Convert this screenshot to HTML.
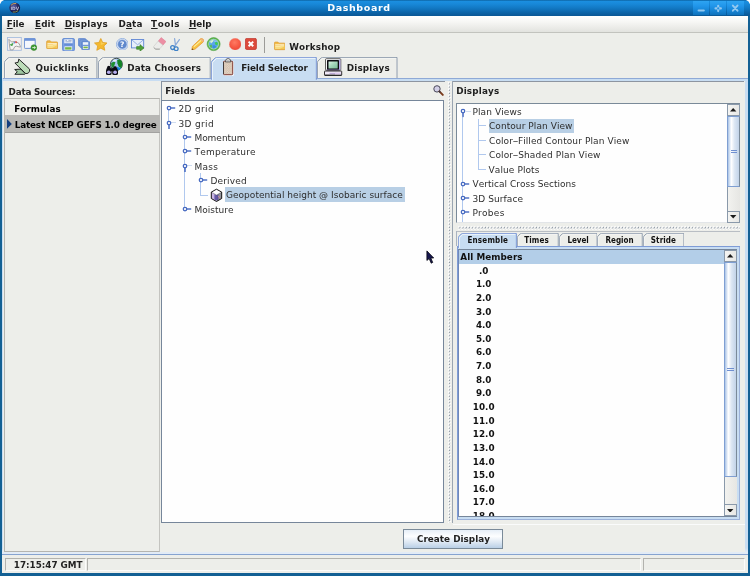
<!DOCTYPE html>
<html>
<head>
<meta charset="utf-8">
<title>Dashboard</title>
<style>
html,body{margin:0;padding:0;}
body{width:750px;height:576px;overflow:hidden;background:#136094;font-family:"DejaVu Sans","Liberation Sans",sans-serif;font-kerning:none;}
#win{position:relative;width:750px;height:576px;overflow:hidden;background:#136094;will-change:transform;filter:blur(0.3px);}
#win div,#win span,#win svg{position:absolute;box-sizing:border-box;white-space:nowrap;}
#win span{line-height:12px;}
#win i{font-style:normal;display:inline-block;transform:scaleX(1.85);margin:0 0.9px 0 0.7px;}
#win u{text-decoration:underline;text-decoration-thickness:0.9px;text-underline-offset:1.1px;text-decoration-skip-ink:none;}
.b{font-weight:bold;font-size:8.8px;color:#1e1e1e;}
.p{font-weight:normal;font-size:9px;color:#2e2e2e;}
.s{font-family:"DejaVu Sans Condensed","DejaVu Sans","Liberation Sans",sans-serif;font-weight:bold;font-size:8px;color:#111;}
.t{font-family:"DejaVu Sans","Liberation Sans",sans-serif;font-weight:bold;font-size:9.5px;color:#fdfeff;}
.tab{background:#edeeea;border:0.9px solid #7a8a99;border-bottom:none;clip-path:polygon(0 5px,5px 0,100% 0,100% 100%,0 100%);}
.tab.sel{background:#c8ddf2;border-color:#6f8fc4;}
.sb{background:linear-gradient(90deg,#f2f2ef,#e6e6e3);border-left:0.9px solid #8a99aa;}
.sbtn{background:linear-gradient(90deg,#f4f4f2,#e8e8e5);border:0.9px solid #8a99aa;}
.thumb{background:linear-gradient(90deg,#a9c3e6 0,#ffffff 30%,#dbe6f3 60%,#c2d3e8 100%);border:0.9px solid #7f9fd2;border-right-color:#7a8a99;}
</style>
</head>
<body>
<div id="win">
<div style="left:0.00px;top:0.00px;width:750.00px;height:16.00px;background:linear-gradient(#0b5c98 0,#1b8fe0 1.2px,#1888d8 4px,#1279c4 8px,#0c66ab 12px,#0a5a9a 15px,#0a5896 16px);"></div>
<svg style="left:0;top:0" width="5" height="5" viewBox="0 0 5 5"><path d="M0 0H4Q1 1 0 4.2Z" fill="#fff"/></svg>
<svg style="left:745px;top:0" width="5" height="5" viewBox="0 0 5 5"><path d="M5 0H1Q4 1 5 4.2Z" fill="#fff"/></svg>
<svg style="left:9px;top:2px" width="11.5" height="11.5" viewBox="0 0 12 12"><defs><radialGradient id="gl" cx="40%" cy="35%" r="70%"><stop offset="0" stop-color="#5b5fa8"/><stop offset=".6" stop-color="#23255c"/><stop offset="1" stop-color="#101030"/></radialGradient></defs><circle cx="6" cy="6" r="5.6" fill="url(#gl)"/><path d="M2 3.5Q4 1 7.5 1.5" stroke="#c9a25a" stroke-width="1" fill="none"/><path d="M4 10.5Q7 11 9.5 9" stroke="#8a9a50" stroke-width="1" fill="none"/><text x="6" y="8" text-anchor="middle" font-family="DejaVu Sans, Liberation Sans, sans-serif" font-weight="bold" font-size="4.6" fill="#c9c9e2" opacity=".9">IDV</text></svg>
<span class="t" style="left:327.20px;top:2px;letter-spacing:0.608px;">Dashboard</span>
<div style="left:692.90px;top:0.90px;width:16.50px;height:14.00px;background:linear-gradient(#2ea4f2 0,#2196ea 35%,#1684d4 70%,#0f72bc 100%);"></div>
<div style="left:710.00px;top:0.90px;width:16.40px;height:14.00px;background:linear-gradient(#2ea4f2 0,#2196ea 35%,#1684d4 70%,#0f72bc 100%);"></div>
<div style="left:727.00px;top:0.90px;width:16.70px;height:14.00px;background:linear-gradient(#2ea4f2 0,#2196ea 35%,#1684d4 70%,#0f72bc 100%);"></div>
<svg style="left:693px;top:1px" width="50.6" height="13.8" viewBox="0 0 50.6 13.8"><g stroke="#92c8f0" fill="none" stroke-linecap="round"><path d="M5.6 9.5H10.8" stroke-width="2.1"/><path d="M25.2 4.7V10.1M22.5 7.4H27.9" stroke-width="2.1"/><circle cx="25.2" cy="7.4" r="1.1" fill="#2590e0" stroke="none"/><path d="M39.9 4.6L44.5 9.7M44.5 4.6L39.9 9.7" stroke-width="2"/></g></svg>
<div style="left:2.40px;top:16.00px;width:745.20px;height:557.40px;background:#edeeea;"></div>
<div style="left:2.40px;top:16.00px;width:745.20px;height:16.60px;background:linear-gradient(#ffffff 0,#f7f7f5 35%,#ecece9 70%,#e2e3df 100%);border-bottom:0.9px solid #c2c3be;"></div>
<span class="b" style="left:6.80px;top:18px;letter-spacing:-0.122px;"><u>F</u>ile</span>
<span class="b" style="left:35.10px;top:18px;letter-spacing:0.073px;"><u>E</u>dit</span>
<span class="b" style="left:64.70px;top:18px;letter-spacing:0.167px;"><u>D</u>isplays</span>
<span class="b" style="left:118.60px;top:18px;letter-spacing:0.120px;">D<u>a</u>ta</span>
<span class="b" style="left:151.10px;top:18px;letter-spacing:0.527px;"><u>T</u>ools</span>
<span class="b" style="left:188.90px;top:18px;"><u>H</u>elp</span>
<svg style="left:7.10px;top:37.10px" width="14.80" height="13.80" viewBox="0 0 16 15"><rect x=".5" y=".5" width="15" height="14" fill="#f6efee" stroke="#a9bfdf" stroke-width="1"/><path d="M2 2.5L5 5.5Q9 3.5 12.5 6.5Q14.5 9 14.5 11L12 10.5Q10.5 9.5 8.5 10.5L6.5 14H3.5Q2.5 9 2.5 7Z" fill="#f4f4f4" stroke="#8a8a8a" stroke-width=".8"/><path d="M3.5 8.5L6.5 7L5.5 9.5Z" fill="#4caf50" stroke="#3c9a40" stroke-width=".8"/><circle cx="9.8" cy="5.8" r="1.1" fill="#e05050"/><circle cx="7.9" cy="6.3" r=".9" fill="#5080e0"/></svg>
<svg style="left:24.20px;top:38.00px" width="13.00" height="12.60" viewBox="0 0 13 12.6"><rect x=".4" y=".4" width="10.8" height="10" rx=".8" fill="#f4f7fd" stroke="#5f86cf" stroke-width=".9"/><rect x=".4" y=".4" width="10.8" height="2.4" fill="#6d93d8"/><circle cx="9.9" cy="9.6" r="2.9" fill="#3e9a32" stroke="#2d7d24" stroke-width=".5"/><path d="M8.3 9.6H11.2M10.2 8.5L11.4 9.6L10.2 10.7" stroke="#e8f6e4" stroke-width=".9" fill="none"/></svg>
<svg style="left:46.00px;top:40.00px" width="12.20" height="9.20" viewBox="0 0 12.2 9.5"><path d="M.5 1.8Q.5 .9 1.4 .9H4.2L5.3 2H11Q11.8 2 11.8 2.9V8.2Q11.8 9 11 9H1.3Q.5 9 .5 8.2Z" fill="#f2bc48" stroke="#dc9c36" stroke-width=".8"/><path d="M1.3 3.3H11V4.4H1.3Z" fill="#fff6d8"/><path d="M1.2 4.6H11.1V8.3H1.2Z" fill="#f9dc80"/><path d="M1.4 5.4H6.4L7.4 4.8H10.8" stroke="#fdf2c4" stroke-width=".7" fill="none"/><path d="M6 8.2L11 5.6V8.2Z" fill="#f4c854"/></svg>
<svg style="left:61.90px;top:37.50px" width="13.00" height="13.40" viewBox="0 0 13 13.4"><rect x=".5" y=".5" width="12" height="12.4" rx="1.4" fill="#7aa0e2" stroke="#658cd4" stroke-width=".9"/><rect x="2.3" y="1.3" width="8.2" height="4" fill="#eef3fb"/><path d="M3.4 2.4H5M6.4 2.4H9.6M3.4 3.8H9.4" stroke="#7a90c0" stroke-width=".7"/><rect x="2.3" y="5.6" width="8.4" height="2" fill="#658cd6"/><rect x="2.5" y="8.4" width="7.6" height="3.8" fill="#f4f7fb"/><rect x="3.1" y="9.2" width="6.4" height="2.4" fill="#78b648"/></svg>
<svg style="left:78.30px;top:38.00px" width="12.10" height="12.20" viewBox="0 0 12.1 12.2"><rect x=".4" y=".4" width="7.2" height="7.6" rx=".9" fill="#7d9fdc" stroke="#5c84cc" stroke-width=".8"/><rect x="1.8" y="1.8" width="7.6" height="7.6" rx=".9" fill="#7d9fdc" stroke="#5c84cc" stroke-width=".8"/><rect x="3.6" y="3.4" width="8" height="8.3" rx=".9" fill="#6f95d8" stroke="#5c84cc" stroke-width=".8"/><rect x="4.9" y="4.2" width="5.3" height="2.6" fill="#eef3fb"/><rect x="5" y="8" width="5.2" height="3" fill="#f4f7fb"/><rect x="5.4" y="8.6" width="4.4" height="1.7" fill="#78b648"/></svg>
<svg style="left:93.60px;top:37.70px" width="13.60" height="12.90" viewBox="0 0 13.6 12.9"><path d="M6.8 .5L8.7 4.5L13.1 5L9.9 8L10.8 12.3L6.8 10.2L2.8 12.3L3.7 8L.5 5L4.9 4.5Z" fill="#f4b92e" stroke="#e0a024" stroke-width=".8" stroke-linejoin="round"/><path d="M6.8 2.2L8 5L11 5.4L6.8 7Z" fill="#f9cf58"/></svg>
<svg style="left:115.70px;top:37.70px" width="12.60" height="12.60" viewBox="0 0 12.6 12.6"><circle cx="6.3" cy="6.3" r="5.9" fill="#e4ecf8" stroke="#88a8dc" stroke-width=".8"/><circle cx="6.3" cy="6.3" r="4.6" fill="#5f88cc" stroke="#a8c0e6" stroke-width=".6"/><text x="6.3" y="9.1" text-anchor="middle" font-family="DejaVu Sans, Liberation Sans, sans-serif" font-weight="bold" font-size="7.6" fill="#fff">?</text></svg>
<svg style="left:131.20px;top:38.70px" width="13.40" height="12.30" viewBox="0 0 13.4 12.3"><rect x=".5" y=".5" width="12.2" height="8.4" fill="#e6eefb" stroke="#5f86d4" stroke-width=".9"/><path d="M.9 .9L6.6 5.8L12.3 .9" stroke="#7f9fdc" stroke-width=".8" fill="none"/><path d="M5.6 7.6H9V5.6L13 9L9 12.2V10.3H5.6Z" fill="#4f9f38" stroke="#357d26" stroke-width=".6" stroke-linejoin="round"/></svg>
<svg style="left:152.80px;top:37.10px" width="13.60" height="12.90" viewBox="0 0 13.6 12.9"><path d="M8.2 .6L13 4.6L9.9 8.2L5.1 4.2Z" fill="#ec8fa4" stroke="#e07a92" stroke-width=".5"/><path d="M5.1 4.2L9.9 8.2L6.6 11.9H2.4L.6 9.6Z" fill="#ececea" stroke="#c4c4c0" stroke-width=".5"/><path d="M1 10.6L2.4 12.2H6.8" stroke="#9a9a98" stroke-width=".9" fill="none"/></svg>
<svg style="left:170.40px;top:37.70px" width="10.20" height="13.10" viewBox="0 0 10.2 13.1"><path d="M4.6 .6L5.6 8.2M9.4 1.6L4.4 8.6" stroke="#88a8d8" stroke-width="1.2" fill="none" stroke-linecap="round"/><circle cx="2.6" cy="9.6" r="1.9" fill="none" stroke="#3f82c8" stroke-width="1.3"/><circle cx="6.2" cy="10.7" r="1.9" fill="none" stroke="#3f82c8" stroke-width="1.3"/></svg>
<svg style="left:190.80px;top:37.70px" width="13.40" height="12.60" viewBox="0 0 13.4 12.6"><path d="M9.6 .8Q11.2 .2 12.4 1.6Q13.2 2.8 12.4 3.8L4.2 11L.8 12L1.4 8.4Z" fill="#f6c443" stroke="#e8962e" stroke-width=".8" stroke-linejoin="round"/><path d="M3 8.6L10.2 2.4" stroke="#fdeea0" stroke-width="1.1"/><path d="M.8 12L1.2 10.2L2.6 11.4Z" fill="#5a4a30"/><path d="M10 1L12.6 3.6" stroke="#f0b090" stroke-width="1.4"/></svg>
<svg style="left:206.00px;top:36.00px" width="16.00" height="16.00" viewBox="206 36 16 16"><circle cx="213.6" cy="44.1" r="6.5" fill="#5cb44e" stroke="#48a040" stroke-width=".6"/><circle cx="213.6" cy="44.1" r="5.3" fill="#b4e4aa"/><circle cx="213.6" cy="44.1" r="4.6" fill="#5aa6ea"/><path d="M210 41.4Q211.6 39.4 214 39.8L213 41.8L211 43.4Z" fill="#d4f2d0"/><path d="M214.6 42.6Q216.8 41.2 218 43.4Q217.6 45.6 215.6 45Z" fill="#3ecc5c"/><path d="M209.4 45.4L211.6 44.6L212.4 47.6L210.8 47.8Z" fill="#58bc58"/><path d="M213.4 40Q216 40 217.2 41.6L214.6 42.2Z" fill="#8cc8f0"/><path d="M212.4 45.4Q214.4 44.6 216.2 46.4Q215.6 48.4 213.6 48.6Q212.2 47.4 212.4 45.4Z" fill="#3a8ee0"/></svg>
<svg style="left:228.90px;top:37.80px" width="12.40" height="12.40" viewBox="0 0 12.4 12.4"><defs><radialGradient id="rg" cx="45%" cy="35%" r="70%"><stop offset="0" stop-color="#ff7a62"/><stop offset=".7" stop-color="#f4533f"/><stop offset="1" stop-color="#e8473a"/></radialGradient></defs><circle cx="6.2" cy="6.2" r="5.9" fill="url(#rg)" stroke="#f08a80" stroke-width=".5"/></svg>
<svg style="left:245.00px;top:38.10px" width="11.80" height="11.90" viewBox="0 0 11.8 11.9"><rect x=".4" y=".4" width="11" height="11.1" rx="1.4" fill="#dc4b3c" stroke="#c23a2e" stroke-width=".8"/><path d="M3.6 3.6L8.2 8.3M8.2 3.6L3.6 8.3" stroke="#fff" stroke-width="2"/></svg>
<div style="left:263.90px;top:37.00px;width:0.90px;height:15.60px;background:#9c9c98;"></div>
<svg style="left:273.80px;top:41.20px" width="11.40" height="9.40" viewBox="0 0 12.2 9.5"><path d="M.5 1.8Q.5 .9 1.4 .9H4.2L5.3 2H11Q11.8 2 11.8 2.9V8.2Q11.8 9 11 9H1.3Q.5 9 .5 8.2Z" fill="#f2bc48" stroke="#dc9c36" stroke-width=".8"/><path d="M1.3 3.3H11V4.4H1.3Z" fill="#fff6d8"/><path d="M1.2 4.6H11.1V8.3H1.2Z" fill="#f9dc80"/><path d="M1.4 5.4H6.4L7.4 4.8H10.8" stroke="#fdf2c4" stroke-width=".7" fill="none"/><path d="M6 8.2L11 5.6V8.2Z" fill="#f4c854"/></svg>
<span class="b" style="left:289.20px;top:41px;letter-spacing:0.167px;">Workshop</span>
<div style="left:2.40px;top:78.20px;width:745.20px;height:476.70px;background:linear-gradient(#c8ddf2 0,#c8ddf2 470px,#e2ebf6 474px);border-bottom:0.9px solid #86a3d0;"></div>
<div style="left:2.50px;top:81.20px;width:742.10px;height:471.00px;background:#edeeea;"></div>
<svg style="left:4.40px;top:57.20px" width="93.40" height="21.20" viewBox="0 0 93.40 21.20"><path d="M0.45 21.200000000000003V5.50Q0.45 4.60 0.95 4.10L4.10 0.95Q4.60 0.45 5.50 0.45H92.95V21.200000000000003" fill="#edeeea" stroke="#8593a6" stroke-width="0.9"/><path d="M1.35 21.200000000000003V5.70L5.50 1.35H92.05" fill="none" stroke="#ffffff" stroke-width="0.8" opacity="0.55"/></svg>
<svg style="left:98.30px;top:57.20px" width="112.70" height="21.20" viewBox="0 0 112.70 21.20"><path d="M0.45 21.200000000000003V5.50Q0.45 4.60 0.95 4.10L4.10 0.95Q4.60 0.45 5.50 0.45H112.25V21.200000000000003" fill="#edeeea" stroke="#8593a6" stroke-width="0.9"/><path d="M1.35 21.200000000000003V5.70L5.50 1.35H111.35" fill="none" stroke="#ffffff" stroke-width="0.8" opacity="0.55"/></svg>
<svg style="left:317.20px;top:57.20px" width="80.50" height="21.20" viewBox="0 0 80.50 21.20"><path d="M0.45 21.200000000000003V5.50Q0.45 4.60 0.95 4.10L4.10 0.95Q4.60 0.45 5.50 0.45H80.05V21.200000000000003" fill="#edeeea" stroke="#8593a6" stroke-width="0.9"/><path d="M1.35 21.200000000000003V5.70L5.50 1.35H79.15" fill="none" stroke="#ffffff" stroke-width="0.8" opacity="0.55"/></svg>
<div style="left:2.50px;top:77.90px;width:745.00px;height:0.90px;background:#8fa9d6;"></div>
<svg style="left:211.30px;top:57.20px" width="105.80" height="22.80" viewBox="0 0 105.80 22.80"><path d="M0.45 22.799999999999997V5.50Q0.45 4.60 0.95 4.10L4.10 0.95Q4.60 0.45 5.50 0.45H105.35V22.799999999999997" fill="#c8ddf2" stroke="#6f8fd2" stroke-width="0.9"/><path d="M1.35 22.799999999999997V5.70L5.50 1.35H104.45" fill="none" stroke="#ffffff" stroke-width="0.8" opacity="0.9"/></svg>
<span class="b" style="left:35.60px;top:62px;letter-spacing:0.216px;">Quicklinks</span>
<span class="b" style="left:127.20px;top:62px;letter-spacing:0.152px;">Data Choosers</span>
<span class="b" style="left:241.20px;top:62px;letter-spacing:-0.139px;">Field Selector</span>
<span class="b" style="left:346.80px;top:62px;letter-spacing:0.167px;">Displays</span>
<svg style="left:13.00px;top:58.00px" width="18.00" height="18.00" viewBox="13 58 18 18"><path d="M14.7 69.5L20.8 69.1L25.4 73.7L24.6 74.3H14.9L17.3 71.7Z" fill="#9fc6a1" stroke="#141414" stroke-width=".9" stroke-linejoin="round"/><path d="M18.8 59.1L29.2 68.7Q30 69.6 29.5 71.3L28.6 72.8Q27 74.1 25.3 73.3L14.9 63L18.1 62.4Z" fill="#bcdcb8" stroke="#141414" stroke-width=".9" stroke-linejoin="round"/></svg>
<svg style="left:104.00px;top:57.00px" width="20.00" height="19.00" viewBox="104 57 20 19"><circle cx="116.4" cy="64.3" r="6" fill="#a6c2ee" stroke="#1c2c24" stroke-width=".8"/><path d="M111 63.6Q112.4 61.4 115.4 62L114.5 65.2L112.8 68.2Q110.8 66.6 111 63.6Z" fill="#1f9030"/><path d="M117.2 60Q120 58.6 121.8 61.6Q122.9 65.4 121.2 68.2L118.6 66.6L117.4 63.2Z" fill="#148428"/><path d="M117.2 66.8L121.2 68.2Q119.8 70 118 70.4L116.6 69.4Z" fill="#1a84d6"/><ellipse cx="114.8" cy="60.6" rx="1.9" ry="1.1" fill="#fff" opacity=".75"/><path d="M107.5 66.2Q108.8 65.5 110.1 66.2L111.6 70.2V73.4Q111.6 75 110 75H107.6Q106 75 106 73.4V70.2Z" fill="#0a0a12"/><path d="M113.7 66.5Q115 65.8 116.3 66.5L118 70.4V73.4Q118 75 116.4 75H113.8Q112.2 75 112.2 73.4V70.4Z" fill="#0a0a12"/><rect x="110.8" y="68.2" width="2.4" height="3" fill="#0a0a12"/><ellipse cx="108.8" cy="72.3" rx="1.9" ry="1.8" fill="#b6aeee"/><ellipse cx="115.1" cy="72.3" rx="1.9" ry="1.8" fill="#b6aeee"/></svg>
<svg style="left:221.00px;top:57.00px" width="15.00" height="20.00" viewBox="221 57 15 20"><defs><pattern id="cb" width="2.4" height="2.4" patternUnits="userSpaceOnUse"><rect width="2.4" height="2.4" fill="#d3bfab"/><circle cx=".6" cy=".6" r=".55" fill="#ebe0d4"/><circle cx="1.8" cy="1.8" r=".55" fill="#ebe0d4"/></pattern></defs><path d="M224.2 75.4H233.4V61.6" stroke="#ffffff" stroke-width=".9" fill="none" opacity=".85"/><rect x="223.5" y="61.2" width="9.2" height="13.5" rx=".9" fill="url(#cb)" stroke="#7c2c22" stroke-width=".9"/><path d="M223.5 62V74" stroke="#3c3c3c" stroke-width=".9"/><path d="M225.4 61.9Q225.4 58.5 228.1 58.5Q230.8 58.5 230.8 61.9Z" fill="#f4f4f4" stroke="#3a3a3a" stroke-width=".8"/><path d="M226.8 60.9H229.6" stroke="#8a8a8a" stroke-width=".8"/></svg>
<svg style="left:323.00px;top:57.00px" width="20.00" height="20.00" viewBox="323 57 20 20"><defs><linearGradient id="scr" x1="0" y1="0" x2="1" y2="1"><stop offset="0" stop-color="#dcf2e6"/><stop offset=".45" stop-color="#a4d6bc"/><stop offset="1" stop-color="#78b898"/></linearGradient></defs><rect x="325.5" y="58.7" width="15.3" height="11.5" rx=".9" fill="#f6f6f8" stroke="#3a3a3a" stroke-width=".8"/><rect x="339" y="59.6" width="1.4" height="10.2" fill="#b4a6e4"/><rect x="327.0" y="60.0" width="12.0" height="9.8" rx=".6" fill="#0c0c12"/><rect x="328.5" y="61.5" width="9.2" height="7.0" fill="url(#scr)"/><rect x="327" y="69.4" width="12.4" height=".9" fill="#54447a"/><rect x="324.5" y="71" width="17.2" height="4.3" rx=".5" fill="#efe8f6" stroke="#1a1a1a" stroke-width=".9"/><path d="M324.6 75.2H341.6" stroke="#111" stroke-width=".9"/><path d="M329.5 73.4H336.5" stroke="#a890c8" stroke-width=".8"/><path d="M335 72.6H340.6V74.4H335Z" fill="#dcc8ec"/></svg>
<span class="b" style="left:8.60px;top:86px;letter-spacing:-0.209px;color:#222;">Data Sources:</span>
<div style="left:4.40px;top:98.00px;width:155.90px;height:453.80px;border:0.9px solid #b4b4b0;border-right-color:#c4c4c0;"></div>
<span class="b" style="left:14.30px;top:103px;letter-spacing:0.048px;color:#000;">Formulas</span>
<div style="left:5.20px;top:115.20px;width:154.40px;height:17.40px;background:#b7b7b4;border-bottom:0.9px solid #a2a2a0;"></div>
<svg style="left:6.90px;top:119.00px" width="4.80" height="9.80" viewBox="0 0 4.8 9.8"><path d="M0 0L4.8 4.9L0 9.8Z" fill="#153f80"/></svg>
<span class="b" style="left:14.70px;top:119px;letter-spacing:-0.139px;color:#000;">Latest NCEP GEFS 1.0 degree</span>
<div style="left:160.90px;top:81.20px;width:284.30px;height:442.00px;border-left:1px solid #8493a3;border-top:0.9px solid #8d95a1;"></div>
<span class="b" style="left:165.20px;top:85px;letter-spacing:0.061px;color:#222;">Fields</span>
<svg style="left:432.60px;top:84.60px" width="11.00" height="11.00" viewBox="0 0 11 11"><circle cx="4" cy="3.9" r="3.2" fill="#d2cfe6" stroke="#4a4a5a" stroke-width="1"/><path d="M6.4 6.4L9.8 9.9" stroke="#7a3a1a" stroke-width="1.9" stroke-linecap="round"/><path d="M6 6L7.4 7.4" stroke="#3a3a4a" stroke-width="1.4"/></svg>
<div style="left:161.10px;top:99.80px;width:283.20px;height:423.40px;background:#fefefe;border:1.2px solid #76869a;"></div>
<div style="left:168.45px;top:110.20px;width:0.90px;height:10.41px;background:#b0c8ee;"></div>
<div style="left:171.20px;top:122.26px;width:5.30px;height:0.90px;background:#cfdcf0;"></div>
<div style="left:184.35px;top:130.21px;width:0.90px;height:76.86px;background:#b0c8ee;"></div>
<div style="left:187.20px;top:165.49px;width:5.30px;height:0.90px;background:#cfdcf0;"></div>
<div style="left:200.15px;top:173.24px;width:0.90px;height:22.42px;background:#b0c8ee;"></div>
<div style="left:200.60px;top:194.81px;width:7.40px;height:0.90px;background:#b0c8ee;"></div>
<svg style="left:165.90px;top:105.20px" width="10.50" height="6.00" viewBox="0 0 10.5 6"><path d="M4.8 3H9.2" stroke="#4468c0" stroke-width="1.4" stroke-linecap="butt"/><circle cx="3" cy="3" r="1.75" fill="#fff" stroke="#4468c0" stroke-width="1.25"/></svg>
<span class="p" style="left:178.50px;top:103px;letter-spacing:0.332px;">2D grid</span>
<svg style="left:165.90px;top:119.61px" width="6.00" height="9.50" viewBox="0 0 6 9.5"><path d="M3 4.6V8.6" stroke="#4468c0" stroke-width="1.5" stroke-linecap="round"/><circle cx="3" cy="3" r="1.75" fill="#fff" stroke="#4468c0" stroke-width="1.25"/></svg>
<span class="p" style="left:178.50px;top:118px;letter-spacing:0.332px;">3D grid</span>
<svg style="left:181.90px;top:134.02px" width="10.50" height="6.00" viewBox="0 0 10.5 6"><path d="M4.8 3H9.2" stroke="#4468c0" stroke-width="1.4" stroke-linecap="butt"/><circle cx="3" cy="3" r="1.75" fill="#fff" stroke="#4468c0" stroke-width="1.25"/></svg>
<span class="p" style="left:194.40px;top:132px;letter-spacing:-0.019px;">Momentum</span>
<svg style="left:181.90px;top:148.43px" width="10.50" height="6.00" viewBox="0 0 10.5 6"><path d="M4.8 3H9.2" stroke="#4468c0" stroke-width="1.4" stroke-linecap="butt"/><circle cx="3" cy="3" r="1.75" fill="#fff" stroke="#4468c0" stroke-width="1.25"/></svg>
<span class="p" style="left:194.60px;top:146px;letter-spacing:0.230px;">Temperature</span>
<svg style="left:181.90px;top:162.84px" width="6.00" height="9.50" viewBox="0 0 6 9.5"><path d="M3 4.6V8.6" stroke="#4468c0" stroke-width="1.5" stroke-linecap="round"/><circle cx="3" cy="3" r="1.75" fill="#fff" stroke="#4468c0" stroke-width="1.25"/></svg>
<span class="p" style="left:194.40px;top:161px;letter-spacing:0.259px;">Mass</span>
<svg style="left:198.00px;top:177.25px" width="10.50" height="6.00" viewBox="0 0 10.5 6"><path d="M4.8 3H9.2" stroke="#4468c0" stroke-width="1.4" stroke-linecap="butt"/><circle cx="3" cy="3" r="1.75" fill="#fff" stroke="#4468c0" stroke-width="1.25"/></svg>
<span class="p" style="left:210.40px;top:175px;letter-spacing:0.167px;">Derived</span>
<div style="left:225.00px;top:187.30px;width:180.20px;height:14.40px;background:#b8cfe5;"></div>
<svg style="left:209.00px;top:187.00px" width="15.00" height="16.00" viewBox="209 187 15 16"><path d="M211.3 192.1L216.5 195V201.5L211.3 198.5Z" fill="#cab6e4"/><path d="M216.5 195L221.7 192.1V198.5L216.5 201.5Z" fill="#94949c"/><path d="M214.4 194.2L216.5 195.2L218.4 194.3V199.6L216.5 200.6L214.4 199.6Z" fill="#54489c" opacity=".85"/><path d="M218.2 196L220.2 198.4" stroke="#d88a98" stroke-width=".9"/><path d="M216.5 189.2L221.7 192.1L216.5 195L211.3 192.1Z" fill="#ffffff"/><path d="M216.5 189.2L221.7 192.1V198.5L216.5 201.5L211.3 198.5V192.1Z" fill="none" stroke="#080808" stroke-width=".95" stroke-linejoin="round"/><path d="M211.3 192.1L216.5 195L221.7 192.1" fill="none" stroke="#080808" stroke-width=".6" opacity=".55"/></svg>
<span class="p" style="left:226.00px;top:189px;letter-spacing:0.032px;">Geopotential height @ Isobaric surface</span>
<svg style="left:181.90px;top:206.07px" width="10.50" height="6.00" viewBox="0 0 10.5 6"><path d="M4.8 3H9.2" stroke="#4468c0" stroke-width="1.4" stroke-linecap="butt"/><circle cx="3" cy="3" r="1.75" fill="#fff" stroke="#4468c0" stroke-width="1.25"/></svg>
<span class="p" style="left:194.40px;top:204px;letter-spacing:0.030px;">Moisture</span>
<div style="left:445.40px;top:81.20px;width:6.60px;height:442.00px;background:#edeeea;"></div>
<div style="left:447.60px;top:82.00px;width:3.60px;height:440.60px;background-image:radial-gradient(circle at 0.9px 0.9px,#ffffff 0.55px,rgba(255,255,255,0) 1.0px),radial-gradient(circle at 1.7px 1.7px,#8f99a6 0.6px,rgba(143,153,166,0) 1.1px),radial-gradient(circle at 2.5px 2.5px,#ffffff 0.55px,rgba(255,255,255,0) 1.0px),radial-gradient(circle at 3.3px 3.3px,#8f99a6 0.6px,rgba(143,153,166,0) 1.1px);background-size:3.2px 3.2px;"></div>
<div style="left:452.00px;top:81.20px;width:0.90px;height:442.20px;background:#9aa5b1;"></div>
<div style="left:452.90px;top:81.10px;width:291.50px;height:0.90px;background:#8d95a1;"></div>
<span class="b" style="left:456.20px;top:85px;letter-spacing:0.167px;color:#222;">Displays</span>
<div style="left:456.00px;top:103.20px;width:284.00px;height:120.20px;background:#fefefe;border:1px solid #7a8a99;border-bottom:0.8px solid #e2e5e8;"></div>
<div style="left:462.35px;top:117.40px;width:0.90px;height:105.00px;background:#b0c8ee;"></div>
<div style="left:465.80px;top:111.05px;width:4.80px;height:0.90px;background:#cfdcf0;"></div>
<div style="left:477.95px;top:118.70px;width:0.90px;height:50.82px;background:#b0c8ee;"></div>
<div style="left:478.40px;top:125.48px;width:7.80px;height:0.90px;background:#b0c8ee;"></div>
<div style="left:478.40px;top:139.91px;width:7.80px;height:0.90px;background:#b0c8ee;"></div>
<div style="left:478.40px;top:154.34px;width:7.80px;height:0.90px;background:#b0c8ee;"></div>
<div style="left:478.40px;top:168.77px;width:7.80px;height:0.90px;background:#b0c8ee;"></div>
<div style="left:488.80px;top:118.80px;width:85.60px;height:14.10px;background:#b8cfe5;"></div>
<svg style="left:460.20px;top:108.40px" width="6.00" height="9.50" viewBox="0 0 6 9.5"><path d="M3 4.6V8.6" stroke="#4468c0" stroke-width="1.5" stroke-linecap="round"/><circle cx="3" cy="3" r="1.75" fill="#fff" stroke="#4468c0" stroke-width="1.25"/></svg>
<span class="p" style="left:472.40px;top:106px;letter-spacing:0.109px;">Plan Views</span>
<span class="p" style="left:489.00px;top:120px;letter-spacing:0.068px;">Contour Plan View</span>
<span class="p" style="left:489.00px;top:135px;letter-spacing:0.095px;">Color<i>-</i>Filled Contour Plan View</span>
<span class="p" style="left:489.00px;top:149px;letter-spacing:0.132px;">Color<i>-</i>Shaded Plan View</span>
<span class="p" style="left:488.60px;top:164px;letter-spacing:0.091px;">Value Plots</span>
<svg style="left:460.20px;top:180.55px" width="10.50" height="6.00" viewBox="0 0 10.5 6"><path d="M4.8 3H9.2" stroke="#4468c0" stroke-width="1.4" stroke-linecap="butt"/><circle cx="3" cy="3" r="1.75" fill="#fff" stroke="#4468c0" stroke-width="1.25"/></svg>
<span class="p" style="left:472.60px;top:178px;letter-spacing:0.015px;">Vertical Cross Sections</span>
<svg style="left:460.20px;top:194.98px" width="10.50" height="6.00" viewBox="0 0 10.5 6"><path d="M4.8 3H9.2" stroke="#4468c0" stroke-width="1.4" stroke-linecap="butt"/><circle cx="3" cy="3" r="1.75" fill="#fff" stroke="#4468c0" stroke-width="1.25"/></svg>
<span class="p" style="left:472.40px;top:193px;letter-spacing:0.093px;">3D Surface</span>
<svg style="left:460.20px;top:209.41px" width="10.50" height="6.00" viewBox="0 0 10.5 6"><path d="M4.8 3H9.2" stroke="#4468c0" stroke-width="1.4" stroke-linecap="butt"/><circle cx="3" cy="3" r="1.75" fill="#fff" stroke="#4468c0" stroke-width="1.25"/></svg>
<span class="p" style="left:472.40px;top:207px;letter-spacing:0.274px;">Probes</span>
<div class="sb" style="left:727.30px;top:104.00px;width:12.30px;height:118.60px;"></div><div class="sbtn" style="left:727.30px;top:104.00px;width:12.30px;height:12.00px;"></div><div class="sbtn" style="left:727.30px;top:210.60px;width:12.30px;height:12.00px;"></div><div class="thumb" style="left:727.30px;top:116.00px;width:12.30px;height:70.80px;"></div><svg style="left:730.25px;top:108.10px" width="6.40" height="3.60" viewBox="0 0 6.4 3.6"><path d="M0 3.6L3.2 0L6.4 3.6Z" fill="#1a1a1a"/></svg><svg style="left:730.25px;top:215.00px" width="6.40" height="3.60" viewBox="0 0 6.4 3.6"><path d="M0 0L3.2 3.6L6.4 0Z" fill="#1a1a1a"/></svg><div style="left:730.50px;top:149.50px;width:6.90px;height:1.00px;background:#6f8fd0;"></div><div style="left:730.50px;top:152.00px;width:6.90px;height:1.00px;background:#6f8fd0;"></div>
<div style="left:452.60px;top:523.80px;width:292.00px;height:0.90px;background:#fafbfb;"></div>
<div style="left:456.00px;top:223.20px;width:284.40px;height:8.80px;background:#edeeea;"></div>
<div style="left:457.60px;top:226.20px;width:282.40px;height:3.60px;background-image:radial-gradient(circle at 0.9px 0.9px,#ffffff 0.55px,rgba(255,255,255,0) 1.0px),radial-gradient(circle at 1.7px 1.7px,#8f99a6 0.6px,rgba(143,153,166,0) 1.1px),radial-gradient(circle at 2.5px 2.5px,#ffffff 0.55px,rgba(255,255,255,0) 1.0px),radial-gradient(circle at 3.3px 3.3px,#8f99a6 0.6px,rgba(143,153,166,0) 1.1px);background-size:3.2px 3.2px;"></div>
<div style="left:456.40px;top:231.00px;width:283.60px;height:0.80px;background:#b9bec4;"></div>
<div style="left:456.30px;top:231.00px;width:0.80px;height:15.40px;background:#a9b3c0;"></div>
<div style="left:456.60px;top:246.20px;width:283.20px;height:273.40px;background:#c8ddf2;border-left:1.1px solid #7f9cd6;border-right:0.8px solid #9cb2da;border-bottom:0.8px solid #9cb2da;"></div>
<svg style="left:517.20px;top:233.20px" width="41.70" height="13.20" viewBox="0 0 41.70 13.20"><path d="M0.425 13.200000000000017V4.50Q0.425 3.60 0.93 3.10L3.10 0.93Q3.60 0.425 4.50 0.425H41.27V13.200000000000017" fill="#edeeea" stroke="#8593a6" stroke-width="0.85"/><path d="M1.27 13.200000000000017V4.70L4.50 1.27H40.42" fill="none" stroke="#ffffff" stroke-width="0.8" opacity="0.55"/></svg>
<svg style="left:558.80px;top:233.20px" width="38.50" height="13.20" viewBox="0 0 38.50 13.20"><path d="M0.425 13.200000000000017V4.50Q0.425 3.60 0.93 3.10L3.10 0.93Q3.60 0.425 4.50 0.425H38.08V13.200000000000017" fill="#edeeea" stroke="#8593a6" stroke-width="0.85"/><path d="M1.27 13.200000000000017V4.70L4.50 1.27H37.23" fill="none" stroke="#ffffff" stroke-width="0.8" opacity="0.55"/></svg>
<svg style="left:597.20px;top:233.20px" width="45.70" height="13.20" viewBox="0 0 45.70 13.20"><path d="M0.425 13.200000000000017V4.50Q0.425 3.60 0.93 3.10L3.10 0.93Q3.60 0.425 4.50 0.425H45.27V13.200000000000017" fill="#edeeea" stroke="#8593a6" stroke-width="0.85"/><path d="M1.27 13.200000000000017V4.70L4.50 1.27H44.42" fill="none" stroke="#ffffff" stroke-width="0.8" opacity="0.55"/></svg>
<svg style="left:642.80px;top:233.20px" width="41.30" height="13.20" viewBox="0 0 41.30 13.20"><path d="M0.425 13.200000000000017V4.50Q0.425 3.60 0.93 3.10L3.10 0.93Q3.60 0.425 4.50 0.425H40.88V13.200000000000017" fill="#edeeea" stroke="#8593a6" stroke-width="0.85"/><path d="M1.27 13.200000000000017V4.70L4.50 1.27H40.03" fill="none" stroke="#ffffff" stroke-width="0.8" opacity="0.55"/></svg>
<div style="left:456.60px;top:245.90px;width:283.10px;height:0.90px;background:#7f9cd6;"></div>
<svg style="left:458.40px;top:233.00px" width="58.80" height="15.00" viewBox="0 0 58.80 15.00"><path d="M0.45 15.0V4.70Q0.45 3.80 0.95 3.30L3.30 0.95Q3.80 0.45 4.70 0.45H58.35V15.0" fill="#c8ddf2" stroke="#6f8fd2" stroke-width="0.9"/><path d="M1.35 15.0V4.90L4.70 1.35H57.45" fill="none" stroke="#ffffff" stroke-width="0.8" opacity="0.9"/></svg>
<span class="s" style="left:467.40px;top:235px;letter-spacing:0.197px;">Ensemble</span>
<span class="s" style="left:524.20px;top:235px;letter-spacing:0.138px;">Times</span>
<span class="s" style="left:567.50px;top:235px;letter-spacing:-0.079px;">Level</span>
<span class="s" style="left:605.50px;top:235px;letter-spacing:0.015px;">Region</span>
<span class="s" style="left:650.80px;top:235px;letter-spacing:0.103px;">Stride</span>
<div style="left:457.80px;top:249.20px;width:279.60px;height:267.80px;background:#fefefe;border:0.9px solid #76869a;border-left:1px solid #7088b8;overflow:hidden;"></div>
<div style="left:458.80px;top:250.00px;width:265.80px;height:13.60px;background:#b3cee8;"></div>
<span class="b" style="left:460.30px;top:251px;letter-spacing:0.061px;color:#111;">All Members</span>
<div style="left:458.00px;top:249.00px;width:266.60px;height:267.20px;overflow:hidden;"><span class="b" style="left:-14.30px;top:16px;width:80px;text-align:center;color:#111;">.0</span><span class="b" style="left:-14.30px;top:29px;width:80px;text-align:center;color:#111;">1.0</span><span class="b" style="left:-14.30px;top:43px;width:80px;text-align:center;color:#111;">2.0</span><span class="b" style="left:-14.30px;top:57px;width:80px;text-align:center;color:#111;">3.0</span><span class="b" style="left:-14.30px;top:70px;width:80px;text-align:center;color:#111;">4.0</span><span class="b" style="left:-14.30px;top:84px;width:80px;text-align:center;color:#111;">5.0</span><span class="b" style="left:-14.30px;top:97px;width:80px;text-align:center;color:#111;">6.0</span><span class="b" style="left:-14.30px;top:111px;width:80px;text-align:center;color:#111;">7.0</span><span class="b" style="left:-14.30px;top:125px;width:80px;text-align:center;color:#111;">8.0</span><span class="b" style="left:-14.30px;top:138px;width:80px;text-align:center;color:#111;">9.0</span><span class="b" style="left:-14.30px;top:152px;width:80px;text-align:center;color:#111;">10.0</span><span class="b" style="left:-14.30px;top:166px;width:80px;text-align:center;color:#111;">11.0</span><span class="b" style="left:-14.30px;top:179px;width:80px;text-align:center;color:#111;">12.0</span><span class="b" style="left:-14.30px;top:193px;width:80px;text-align:center;color:#111;">13.0</span><span class="b" style="left:-14.30px;top:207px;width:80px;text-align:center;color:#111;">14.0</span><span class="b" style="left:-14.30px;top:220px;width:80px;text-align:center;color:#111;">15.0</span><span class="b" style="left:-14.30px;top:234px;width:80px;text-align:center;color:#111;">16.0</span><span class="b" style="left:-14.30px;top:247px;width:80px;text-align:center;color:#111;">17.0</span><span class="b" style="left:-14.30px;top:261px;width:80px;text-align:center;color:#111;">18.0</span></div>
<div class="sb" style="left:724.20px;top:250.00px;width:12.40px;height:266.20px;"></div><div class="sbtn" style="left:724.20px;top:250.00px;width:12.40px;height:12.20px;"></div><div class="sbtn" style="left:724.20px;top:504.00px;width:12.40px;height:12.20px;"></div><div class="thumb" style="left:724.20px;top:262.20px;width:12.40px;height:214.40px;"></div><svg style="left:727.20px;top:254.20px" width="6.40" height="3.60" viewBox="0 0 6.4 3.6"><path d="M0 3.6L3.2 0L6.4 3.6Z" fill="#1a1a1a"/></svg><svg style="left:727.20px;top:508.50px" width="6.40" height="3.60" viewBox="0 0 6.4 3.6"><path d="M0 0L3.2 3.6L6.4 0Z" fill="#1a1a1a"/></svg><div style="left:727.40px;top:367.50px;width:7.00px;height:1.00px;background:#6f8fd0;"></div><div style="left:727.40px;top:370.00px;width:7.00px;height:1.00px;background:#6f8fd0;"></div>
<div style="left:403.40px;top:529.00px;width:99.60px;height:19.70px;background:linear-gradient(#e6eef7 0,#fdfeff 35%,#dbe6f2 70%,#b9cfe6 100%);border:0.9px solid #7a8a99;"></div>
<span class="b" style="left:417.00px;top:533px;letter-spacing:0.037px;color:#222;">Create Display</span>
<div style="left:5.20px;top:557.60px;width:80.60px;height:13.60px;background:#edeeea;border-top:0.9px solid #b2b2ae;border-left:0.9px solid #b2b2ae;border-right:0.9px solid #fbfbfa;border-bottom:0.9px solid #fbfbfa;"></div>
<div style="left:87.00px;top:557.60px;width:554.40px;height:13.60px;background:#edeeea;border-top:0.9px solid #b2b2ae;border-left:0.9px solid #b2b2ae;border-right:0.9px solid #fbfbfa;border-bottom:0.9px solid #fbfbfa;"></div>
<div style="left:642.60px;top:557.60px;width:102.60px;height:13.60px;background:#edeeea;border-top:0.9px solid #b2b2ae;border-left:0.9px solid #b2b2ae;border-right:0.9px solid #fbfbfa;border-bottom:0.9px solid #fbfbfa;"></div>
<span class="b" style="left:13.80px;top:559px;letter-spacing:-0.006px;color:#222;">17:15:47 GMT</span>
<svg style="left:424.00px;top:248.00px" width="13.00" height="18.00" viewBox="424 248 13 18"><path d="M426.9 250.9V260.4L429.2 258.6L431.2 263.2L432.7 262.4L430.8 258H433.7Z" fill="none" stroke="#ffffff" stroke-width="1.8" stroke-linejoin="round" opacity=".8"/><path d="M426.9 250.9V260.4L429.2 258.6L431.2 263.2L432.7 262.4L430.8 258H433.7Z" fill="#16164e" stroke="#050510" stroke-width=".8" stroke-linejoin="round"/></svg>
</div>
</body>
</html>
